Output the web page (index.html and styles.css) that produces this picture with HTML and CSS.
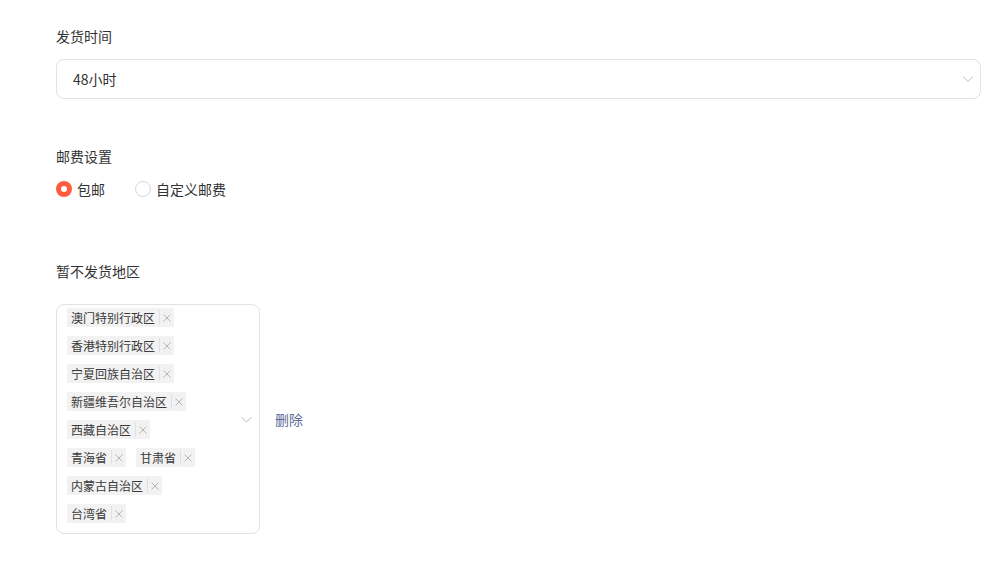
FILE: index.html
```html
<!DOCTYPE html>
<html>
<head>
  <title>发货设置</title>
  <meta name="viewport" content="width=device-width, initial-scale=1">
  <link rel="stylesheet" href="styles.css">
</head>
<body>

  <div class="form">
    <div class="field field-time">
      <label class="field-label">发货时间</label>
      <div class="select">
        <span class="select-value">48小时</span>
        <svg class="arrow" width="12" height="8" viewBox="0 0 12 8"><path d="M1 1.5 L6 6.5 L11 1.5" fill="none" stroke="#bbb" stroke-width="1"/></svg>
      </div>
    </div>

    <div class="field field-fee">
      <label class="field-label">邮费设置</label>
      <div class="radios">
        <span class="radio checked"><i class="dot"></i>包邮</span>
        <span class="radio"><i class="dot"></i>自定义邮费</span>
      </div>
    </div>

    <div class="field field-area">
      <label class="field-label">暂不发货地区</label>
      <div class="area-row">
        <div class="multi">
          <div class="tags">
            <span class="tag">澳门特别行政区<i class="close"><svg width="8" height="8" viewBox="0 0 8 8"><path d="M0.5 0.5 L7.5 7.5 M7.5 0.5 L0.5 7.5" stroke="#b5b5b5" stroke-width="1"/></svg></i></span>
            <span class="tag">香港特别行政区<i class="close"><svg width="8" height="8" viewBox="0 0 8 8"><path d="M0.5 0.5 L7.5 7.5 M7.5 0.5 L0.5 7.5" stroke="#b5b5b5" stroke-width="1"/></svg></i></span>
            <span class="tag">宁夏回族自治区<i class="close"><svg width="8" height="8" viewBox="0 0 8 8"><path d="M0.5 0.5 L7.5 7.5 M7.5 0.5 L0.5 7.5" stroke="#b5b5b5" stroke-width="1"/></svg></i></span>
            <span class="tag">新疆维吾尔自治区<i class="close"><svg width="8" height="8" viewBox="0 0 8 8"><path d="M0.5 0.5 L7.5 7.5 M7.5 0.5 L0.5 7.5" stroke="#b5b5b5" stroke-width="1"/></svg></i></span>
            <span class="tag">西藏自治区<i class="close"><svg width="8" height="8" viewBox="0 0 8 8"><path d="M0.5 0.5 L7.5 7.5 M7.5 0.5 L0.5 7.5" stroke="#b5b5b5" stroke-width="1"/></svg></i></span>
            <span class="tag">青海省<i class="close"><svg width="8" height="8" viewBox="0 0 8 8"><path d="M0.5 0.5 L7.5 7.5 M7.5 0.5 L0.5 7.5" stroke="#b5b5b5" stroke-width="1"/></svg></i></span>
            <span class="tag">甘肃省<i class="close"><svg width="8" height="8" viewBox="0 0 8 8"><path d="M0.5 0.5 L7.5 7.5 M7.5 0.5 L0.5 7.5" stroke="#b5b5b5" stroke-width="1"/></svg></i></span>
            <span class="tag">内蒙古自治区<i class="close"><svg width="8" height="8" viewBox="0 0 8 8"><path d="M0.5 0.5 L7.5 7.5 M7.5 0.5 L0.5 7.5" stroke="#b5b5b5" stroke-width="1"/></svg></i></span>
            <span class="tag">台湾省<i class="close"><svg width="8" height="8" viewBox="0 0 8 8"><path d="M0.5 0.5 L7.5 7.5 M7.5 0.5 L0.5 7.5" stroke="#b5b5b5" stroke-width="1"/></svg></i></span>
          </div>
          <svg class="arrow small" width="11" height="7" viewBox="0 0 11 7"><path d="M0.5 1 L5.5 6 L10.5 1" fill="none" stroke="#bbb" stroke-width="1"/></svg>
        </div>
        <a class="del" href="#">删除</a>
      </div>
    </div>
  </div>

</body>
</html>
```
FILE: styles.css
```css
body {
  margin: 0;
  padding: 26px 8px 0 56px;
  background: #fff;
  color: #333;
  font-family: "Noto Sans CJK SC", "Liberation Sans", sans-serif;
  font-size: 14px;
}
.field-label {
  display: block;
  line-height: 20px;
  font-size: 14px;
  color: #333;
}
.select {
  margin-top: 13px;
  height: 40px;
  box-sizing: border-box;
  border: 1px solid #e2e2e2;
  border-radius: 8px;
  display: flex;
  align-items: center;
  justify-content: space-between;
  padding: 0 6px 0 16px;
}
.select-value {
  font-size: 14px;
  color: #333;
}
.field-fee {
  margin-top: 47px;
}
.radios {
  margin-top: 12px;
  display: flex;
  align-items: center;
  gap: 30px;
  height: 22px;
}
.radio {
  display: flex;
  align-items: center;
  gap: 5px;
  font-size: 14px;
}
.dot {
  width: 16px;
  height: 16px;
  box-sizing: border-box;
  border: 1px solid #d6d6d6;
  border-radius: 50%;
  display: inline-block;
}
.radio.checked .dot {
  border: 5px solid #ff5c3e;
  background: #fff;
}
.field-area {
  margin-top: 61px;
}
.area-row {
  margin-top: 23px;
  display: flex;
  align-items: center;
  gap: 15px;
}
.multi {
  width: 204px;
  height: 230px;
  box-sizing: border-box;
  border: 1px solid #e2e2e2;
  border-radius: 8px;
  display: flex;
  align-items: center;
}
.tags {
  width: 153px;
  box-sizing: border-box;
  padding: 3px 0 9px 10px;
  display: flex;
  flex-wrap: wrap;
  column-gap: 10px;
  row-gap: 9px;
  align-self: flex-start;
}
.tag {
  display: flex;
  align-items: center;
  height: 19px;
  line-height: 19px;
  padding-left: 4px;
  background: #f2f2f2;
  font-size: 12px;
  color: #3a3a3a;
  white-space: nowrap;
}
.close {
  margin-left: 4px;
  width: 14px;
  height: 15px;
  border-left: 1px solid #e0e0e0;
  display: flex;
  align-items: center;
  justify-content: center;
}
.arrow.small {
  margin-left: 31px;
}
.del {
  color: #5b6c94;
  font-size: 14px;
  text-decoration: none;
}
```
